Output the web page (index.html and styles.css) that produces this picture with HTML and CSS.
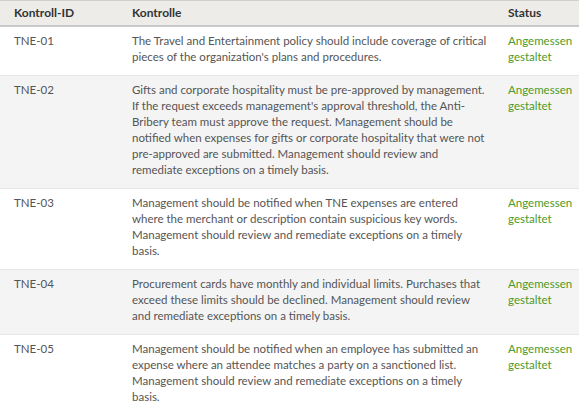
FILE: index.html
```html
<!DOCTYPE html>
<html lang="de">
<head>
<meta charset="utf-8">
<link rel="stylesheet" href="styles.css">
</head>
<body>
<table class="controls">
  <colgroup>
    <col class="c-id">
    <col class="c-text">
    <col class="c-status">
  </colgroup>
  <thead>
    <tr>
      <th>Kontroll-ID</th>
      <th>Kontrolle</th>
      <th>Status</th>
    </tr>
  </thead>
  <tbody>
    <tr>
      <td class="id">TNE-01</td>
      <td>The Travel and Entertainment policy should include coverage of critical pieces of the organization's plans and procedures.</td>
      <td class="status">Angemessen gestaltet</td>
    </tr>
    <tr>
      <td class="id">TNE-02</td>
      <td>Gifts and corporate hospitality must be pre-approved by management. If the request exceeds management's approval threshold, the Anti-Bribery team must approve the request. Management should be notified when expenses for gifts or corporate hospitality that were not pre-approved are submitted. Management should review and remediate exceptions on a timely basis.</td>
      <td class="status">Angemessen gestaltet</td>
    </tr>
    <tr>
      <td class="id">TNE-03</td>
      <td>Management should be notified when TNE expenses are entered where the merchant or description contain suspicious key words. Management should review and remediate exceptions on a timely basis.</td>
      <td class="status">Angemessen gestaltet</td>
    </tr>
    <tr>
      <td class="id">TNE-04</td>
      <td>Procurement cards have monthly and individual limits. Purchases that exceed these limits should be declined. Management should review and remediate exceptions on a timely basis.</td>
      <td class="status">Angemessen gestaltet</td>
    </tr>
    <tr>
      <td class="id">TNE-05</td>
      <td>Management should be notified when an employee has submitted an expense where an attendee matches a party on a sanctioned list. Management should review and remediate exceptions on a timely basis.</td>
      <td class="status">Angemessen gestaltet</td>
    </tr>
  </tbody>
</table>
</body>
</html>
```
FILE: styles.css
```css
html, body {
  margin: 0;
  padding: 0;
  background: #ffffff;
}
body {
  font-family: Lato, "Open Sans", sans-serif;
  font-size: 11.5px;
  line-height: 16px;
  color: #555555;
}
.controls {
  width: 579px;
  border-collapse: collapse;
  table-layout: fixed;
}
.c-id { width: 118px; }
.c-text { width: 376px; }
.c-status { width: 85px; }
.controls th {
  text-align: left;
  font-weight: bold;
  font-size: 12px;
  color: #333333;
  background: #edece9;
  border-top: 1px solid #cfcfcf;
  border-bottom: 2px solid #c9c9c9;
  padding: 4px 14px 4px 14px;
  height: 16px;
}
.controls td {
  vertical-align: top;
  padding: 6px 6px 10px 14px;
  border-top: 1px solid #e6e6e6;
}
.controls tbody tr:nth-child(even) td {
  background: #f4f4f4;
}
.controls td.status {
  color: #4e9a26;
  padding-right: 2px;
}
```
